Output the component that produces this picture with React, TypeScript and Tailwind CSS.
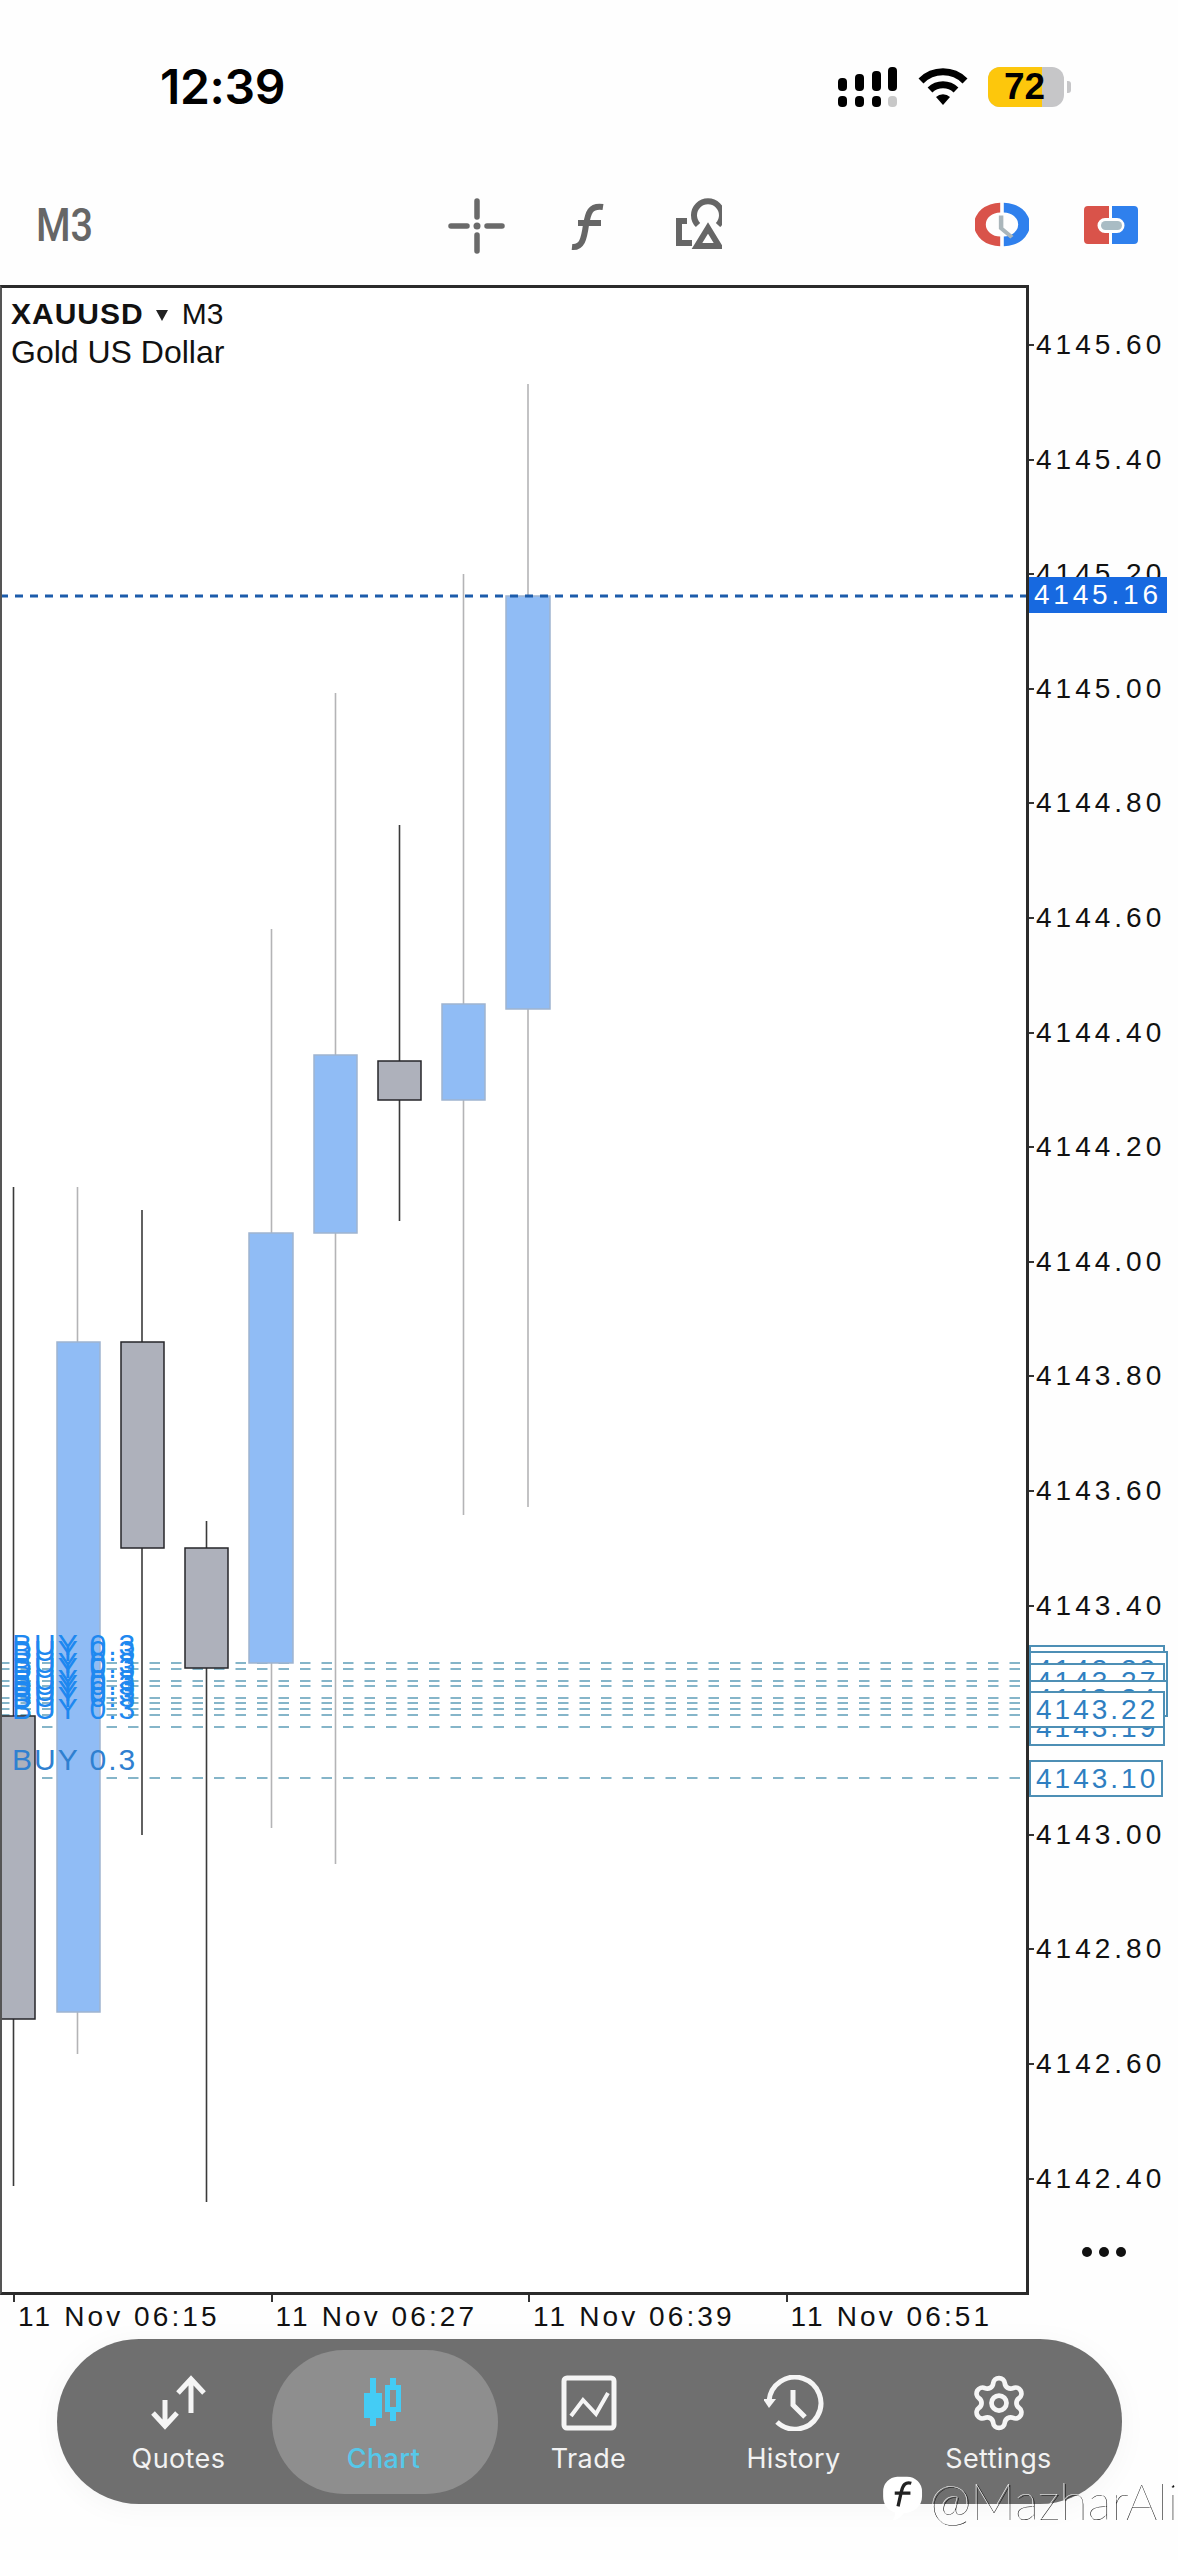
import React from 'react';
import { Settings } from 'lucide-react';

const priceFont = { fontFamily: '"Liberation Sans", Arial, sans-serif' };

// page-space y for a price, 0.20 on the axis is 114.6px
const priceY = (p: number) => 345 + (4145.6 - p) * 573;

const candles = [
  { x: -9, w: 44, wick: 13.5, hi: 1187, lo: 2186, top: 1716, bot: 2019, up: false },
  { x: 57, w: 43, wick: 77.5, hi: 1187, lo: 2054, top: 1342, bot: 2012, up: true },
  { x: 121, w: 43, wick: 142, hi: 1210, lo: 1835, top: 1342, bot: 1548, up: false },
  { x: 185, w: 43, wick: 206.5, hi: 1521, lo: 2202, top: 1548, bot: 1668, up: false },
  { x: 249, w: 44, wick: 271.5, hi: 929, lo: 1828, top: 1233, bot: 1663, up: true },
  { x: 314, w: 43, wick: 335.5, hi: 693, lo: 1864, top: 1055, bot: 1233, up: true },
  { x: 378, w: 43, wick: 399.5, hi: 825, lo: 1221, top: 1061, bot: 1100, up: false },
  { x: 442, w: 43, wick: 463.5, hi: 574, lo: 1515, top: 1004, bot: 1100, up: true },
  { x: 506, w: 44, wick: 528, hi: 384, lo: 1507, top: 596, bot: 1009, up: true },
];

const orderLines = [1663, 1669, 1681, 1686, 1698, 1703, 1709, 1715, 1727, 1778];

const axisPrices = [
  '4145.60', '4145.40', '4145.20', '4145.00', '4144.80', '4144.60', '4144.40', '4144.20', '4144.00',
  '4143.80', '4143.60', '4143.40', '4143.00', '4142.80', '4142.60', '4142.40',
];

const orderBoxes = [
  { label: '4143.30', y: 1663, w: 136 },
  { label: '4143.29', y: 1669, w: 139 },
  { label: '4143.27', y: 1681, w: 136 },
  { label: '4143.24', y: 1698, w: 139 },
  { label: '4143.19', y: 1727, w: 136 },
  { label: '4143.22', y: 1709, w: 136 },
  { label: '4143.10', y: 1778, w: 134 },
];

function StatusBar() {
  return (
    <div className="flex items-center h-[174px] pl-[160px] shrink-0">
      <span className="text-[48px] leading-none font-semibold text-black tracking-[-0.3px]" style={{ fontFamily: 'Inter, sans-serif' }}>
        12:39
      </span>
      <div className="ml-auto flex items-center mr-[107px] gap-[20px]">
        <svg width="60" height="40" viewBox="0 0 60 40">
          <rect x="0" y="11" width="9" height="13" rx="4" fill="#000" />
          <rect x="17" y="7" width="9" height="17" rx="4" fill="#000" />
          <rect x="34" y="4" width="9" height="20" rx="4" fill="#000" />
          <rect x="50" y="0" width="9" height="24" rx="4" fill="#000" />
          <rect x="0" y="29" width="9" height="11" rx="4" fill="#000" />
          <rect x="17" y="29" width="9" height="11" rx="4" fill="#000" />
          <rect x="34" y="29" width="9" height="11" rx="4" fill="#000" />
          <rect x="50" y="29" width="9" height="11" rx="4" fill="#c8c8c8" />
        </svg>
        <svg width="50" height="38" viewBox="0 0 50 38">
          <path d="M3 13 A31 31 0 0 1 47 13" fill="none" stroke="#000" strokeWidth="7" />
          <path d="M12 22 A19 19 0 0 1 38 22" fill="none" stroke="#000" strokeWidth="7" />
          <path d="M18 29 L25 37 L32 29 A10 10 0 0 0 18 29 Z" fill="#000" />
        </svg>
        <div className="relative flex items-center">
          <div className="w-[76px] h-[40px] rounded-[12px] bg-[#c6c6c8] overflow-hidden flex">
            <div className="w-[54px] bg-[#fdc70c]" />
          </div>
          <span className="absolute left-[16px] top-[2px] text-[37px] leading-[36px] font-bold text-black" style={priceFont}>
            72
          </span>
          <div className="w-[4px] h-[12px] rounded-r-[3px] bg-[#c6c6c8] ml-[3px]" />
        </div>
      </div>
    </div>
  );
}

function Toolbar() {
  return (
    <div className="flex items-center h-[111px] pl-[36px] shrink-0 text-[#666]">
      <span className="w-[406px] text-[46px] leading-none font-medium text-[#666] -mt-[10px] scale-x-[0.86] origin-left" style={{ fontFamily: 'Roboto, sans-serif' }}>
        M3
      </span>
      <svg width="280" height="64" viewBox="442 192 280 64" className="-mt-[10px]">
        <g stroke="#6a6a6a" strokeWidth="5.5" strokeLinecap="round" fill="none">
          <path d="M451 225 H467 M487 225 H502 M477 200 V216 M477 234 V250" />
        </g>
        <circle cx="477" cy="225" r="3.5" fill="#6a6a6a" />
        <g stroke="#666" fill="none">
          <path d="M603 206 C590 204 588 212 586 224 C584 238 582 247 572 246" strokeWidth="6" />
          <path d="M578 222 H601" strokeWidth="6" />
          <path d="M698 224 A14 14 0 1 1 718 224" strokeWidth="6" />
          <path d="M708 227 L697 245 H719 Z" strokeWidth="6" />
          <path d="M687 220 H679 V242 H692" strokeWidth="6" />
        </g>
      </svg>
      <svg width="54" height="45" viewBox="0 0 60 60" preserveAspectRatio="none" className="ml-[253px] -mt-[10px] shrink-0">
        <path d="M28 1 A29 29 0 0 0 28 59 V46 A16 16 0 0 1 28 14 Z" fill="#d9534a" />
        <path d="M32 1 A29 29 0 0 1 32 59 V46 A16 16 0 0 0 32 14 Z" fill="#2f80ed" />
        <path d="M29 18 V35 L41 47" fill="none" stroke="#aab6bb" strokeWidth="5" />
      </svg>
      <svg width="54" height="38" viewBox="0 0 54 38" className="ml-[55px] -mt-[10px] shrink-0">
        <path d="M25 0 H4 A4 4 0 0 0 0 4 V34 A4 4 0 0 0 4 38 H25 V27 H21 A7.5 7.5 0 0 1 21 12 H25 Z" fill="#d9534a" />
        <path d="M28 0 H50 A4 4 0 0 1 54 4 V34 A4 4 0 0 1 50 38 H28 V27 H33 A7.5 7.5 0 0 0 33 12 H28 Z" fill="#2f80ed" />
        <rect x="17" y="15" width="21" height="9" rx="4.5" fill="#a9bcc4" />
      </svg>
    </div>
  );
}

function ChartPane() {
  return (
    <div className="relative w-[1029px] h-[2010px] border-t-[3px] border-r-[3px] border-b-[3px] border-l-2 border-[#2b2b2b] border-l-[#555] bg-white overflow-hidden pl-[9px] pt-[6px]">
      <svg width="1029" height="2010" viewBox="0 285 1029 2010" className="absolute -left-[2px] -top-[3px]">
        <g stroke="#5d9db8" strokeWidth="1.5" strokeDasharray="10.5 11">
          {orderLines.map((y) => (
            <line key={y} x1="-1" x2="1026" y1={y} y2={y} />
          ))}
        </g>
        {candles.map((c) => (
          <g key={c.x}>
            <line x1={c.wick} x2={c.wick} y1={c.hi} y2={c.lo} stroke={c.up ? '#b4b4b6' : '#3a3a3a'} strokeWidth="1.6" />
            <rect
              x={c.x}
              y={c.top}
              width={c.w}
              height={c.bot - c.top}
              fill={c.up ? '#90bcf5' : '#aeb1bb'}
              stroke={c.up ? '#9fb4cf' : '#26262a'}
              strokeWidth="1.5"
            />
          </g>
        ))}
        <line x1="0" x2="1026" y1="596" y2="596" stroke="#1c5cab" strokeWidth="3" strokeDasharray="8 7" />
        <g fontSize="30" letterSpacing="2" style={priceFont}>
          {orderLines.slice(0, 9).map((y) => (
            <text key={y} x="12" y={y - 8} fill="#1e88f0">
              BUY 0.3
            </text>
          ))}
          <text x="12" y="1770" fill="#2f80d0">
            BUY 0.3
          </text>
        </g>
      </svg>
      <div className="relative leading-[39px] text-[#111]" style={priceFont}>
        <div className="flex items-center text-[30px]">
          <span className="font-bold tracking-[1px]">XAUUSD</span>
          <svg width="12" height="12" viewBox="0 0 12 12" className="ml-[12px] mr-[14px] mt-[3px]">
            <path d="M0 1 H12 L6 12 Z" fill="#222" />
          </svg>
          <span>M3</span>
        </div>
        <div className="text-[32px]">Gold US Dollar</div>
      </div>
    </div>
  );
}

function PriceAxis() {
  return (
    <div className="relative flex-1 h-[2010px]" style={priceFont}>
      {axisPrices.map((p) => (
        <div key={p} className="absolute left-0 flex items-center h-[36px]" style={{ top: priceY(parseFloat(p)) - 285 - 18 }}>
          <span className="w-[5px] h-[2px] bg-[#333] mr-[2px]" />
          <span className="text-[28px] tracking-[4px] text-[#111] leading-none">{p}</span>
        </div>
      ))}
      {orderBoxes.map((b) => (
        <div
          key={b.label}
          className="absolute left-0 h-[37px] bg-white border-2 border-[#4d8fb5] text-[#2f7fc1] text-[28px] tracking-[3px] leading-[33px] pl-[5px] overflow-hidden"
          style={{ top: b.y - 285 - 18, width: b.w }}
        >
          {b.label}
        </div>
      ))}
      <div className="absolute left-0 top-[292px] h-[36px] w-[138px] bg-[#1769e0] text-white text-[28px] tracking-[3.8px] leading-[36px] pl-[5px]">
        4145.16
      </div>
      <div className="absolute left-[53px] top-[1962px] flex gap-[7px]">
        <span className="w-[10px] h-[10px] rounded-full bg-[#111]" />
        <span className="w-[10px] h-[10px] rounded-full bg-[#111]" />
        <span className="w-[10px] h-[10px] rounded-full bg-[#111]" />
      </div>
    </div>
  );
}

function TimeAxis() {
  const labels = ['11 Nov 06:15', '11 Nov 06:27', '11 Nov 06:39', '11 Nov 06:51'];
  return (
    <div className="flex pl-[13px] h-[44px] shrink-0" style={priceFont}>
      {labels.map((l) => (
        <div key={l} className="relative w-[257.5px] shrink-0">
          <span className="absolute left-0 top-0 w-[2px] h-[7px] bg-[#333]" />
          <span className="absolute left-[5px] top-[6px] text-[28px] leading-[32px] tracking-[3.1px] text-[#111] whitespace-nowrap">{l}</span>
        </div>
      ))}
    </div>
  );
}

const navItems = [
  {
    label: 'Quotes',
    icon: (
      <svg width="60" height="56" viewBox="0 0 60 56" fill="none" stroke="#f5f5f5" strokeWidth="5">
        <path d="M42 38 V5 M29 18 L42 4 L55 18" />
        <path d="M16 25 V51 M4 38 L16 51 L28 38" />
      </svg>
    ),
  },
  {
    label: 'Chart',
    active: true,
    icon: (
      <svg width="60" height="56" viewBox="0 0 60 56" fill="#44ccf5">
        <rect x="16" y="3" width="6" height="48" />
        <rect x="10" y="18" width="18" height="25" />
        <path fillRule="evenodd" d="M36 3 H42 V10 H47 V37 H42 V46 H36 V37 H31 V10 H36 Z M36 15 V32 H42 V15 Z" />
      </svg>
    ),
  },
  {
    label: 'Trade',
    icon: (
      <svg width="60" height="56" viewBox="0 0 60 56" fill="none" stroke="#f5f5f5">
        <rect x="5" y="3" width="50" height="50" rx="3" strokeWidth="5" />
        <path d="M12 41 L24 25 L37 39 L49 18" strokeWidth="4" />
      </svg>
    ),
  },
  {
    label: 'History',
    icon: (
      <svg width="60" height="56" viewBox="0 0 60 56" fill="none" stroke="#f5f5f5">
        <path d="M13 47 A26 26 0 1 0 5 26" strokeWidth="5" />
        <path d="M-1 24 H12 L5 33 Z" fill="#f5f5f5" stroke="none" />
        <path d="M29 15 V30 L41 42" strokeWidth="5" />
      </svg>
    ),
  },
  {
    label: 'Settings',
    icon: <Settings size={60} strokeWidth={1.9} color="#f5f5f5" />,
  },
];

function BottomNav() {
  return (
    <div className="relative ml-[57px] w-[1065px] h-[165px] rounded-[82px] bg-[#6f6f6f] flex pl-[19px] shadow-[0_4px_30px_rgba(0,0,0,0.04)]">
      {navItems.map((item) => (
        <div key={item.label} className="relative w-[205px] flex flex-col items-center pt-[36px]">
          {item.active && <div className="absolute left-[-9px] top-[11px] w-[226px] h-[144px] rounded-[72px] bg-[#8e8e8e]" />}
          <div className="relative h-[56px] flex items-center justify-center">{item.icon}</div>
          <span
            className={`relative mt-[11px] text-[27px] leading-[34px] tracking-[0.4px] ${item.active ? 'text-[#55c8ea] font-medium' : 'text-[#f2f2f2]'}`}
            style={{ fontFamily: 'Inter, sans-serif' }}
          >
            {item.label}
          </span>
        </div>
      ))}
    </div>
  );
}

export default function App() {
  return (
    <div className="relative w-[1178px] h-[2560px] bg-[#fefefe] overflow-hidden flex flex-col">
      <StatusBar />
      <Toolbar />
      <div className="flex shrink-0">
        <ChartPane />
        <PriceAxis />
      </div>
      <TimeAxis />
      <BottomNav />
      {/* watermark over the nav corner */}
      <div className="absolute left-[882px] top-[2475px] flex items-start">
        <svg width="42" height="48" viewBox="0 0 50 58">
          <path d="M18 2 H30 A18 18 0 0 1 48 20 V26 C48 38 38 46 26 46 C22 52 16 55 12 55 C15 51 16 48 15 45 C6 43 1 35 1 26 V20 A18 18 0 0 1 18 2 Z" fill="#fff" />
          <path d="M35 10 C28 8 25 12 23 20 L19 38 M15 22 H34" fill="none" stroke="#222" strokeWidth="4" />
        </svg>
        <span
          className="ml-[5px] text-[50px] leading-[50px] font-thin text-white [text-shadow:1.5px_1px_0_#111]"
          style={{ fontFamily: 'Lato, sans-serif' }}
        >
          @MazharAli
        </span>
      </div>
    </div>
  );
}
